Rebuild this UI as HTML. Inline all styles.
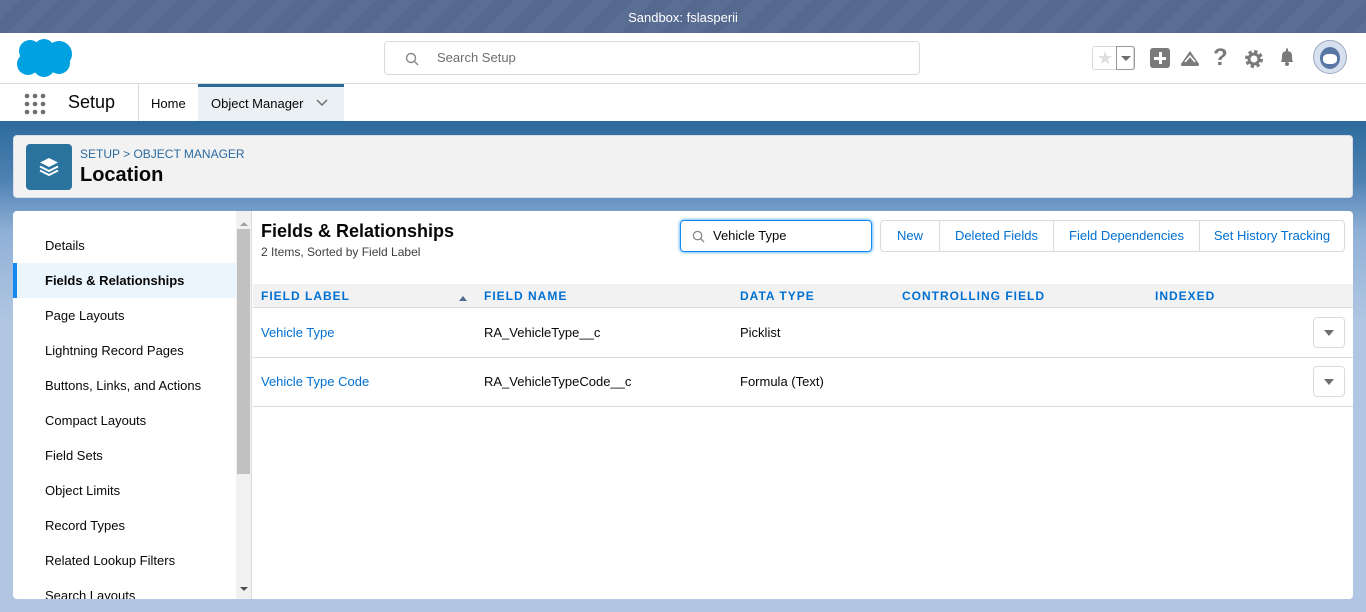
<!DOCTYPE html>
<html><head><meta charset="utf-8">
<style>
*{box-sizing:border-box;margin:0;padding:0}
body{width:1366px;height:612px;overflow:hidden;font-family:"Liberation Sans",sans-serif;font-size:13px;color:#080707;background:#fff;position:relative}
.abs{position:absolute}
#sb{left:0;top:0;width:1366px;height:33px;background:repeating-linear-gradient(135deg,#5a6e94 0 14px,#55698f 14px 28px);color:#fff;text-align:center;line-height:36px;font-size:13px}
#hdr{left:0;top:33px;width:1366px;height:51px;background:#fff;border-bottom:1px solid #dddbda}
#search{left:384px;top:8px;width:536px;height:34px;border:1px solid #dddbda;border-radius:4px;color:#706e6b;line-height:32px;padding-left:52px}
#nav{left:0;top:84px;width:1366px;height:37px;background:#fff}
#bg{left:0;top:121px;width:1366px;height:491px;background:linear-gradient(#2c6a9c 0,#4f82b3 60px,#8fb0d6 110px,#b0c6e2 200px,#b0c6e2 100%)}
#card{left:13px;top:135px;width:1340px;height:63px;background:#f3f2f2;border:1px solid #d8dde6;border-radius:4px}
#panel{left:13px;top:211px;width:1340px;height:388px;background:#fff;border-radius:4px;overflow:hidden}
.side a{display:block;height:35px;line-height:35px;padding-left:32px;color:#080707;text-decoration:none}
.btn{position:absolute;top:9px;height:32px;line-height:30px;border:1px solid #dddbda;color:#0070d2;text-align:center;background:#fff}
th{font-size:12px;font-weight:bold;letter-spacing:1px;color:#0070d2;text-align:left}
td{font-size:13px}
.ic{position:absolute;top:15px}
</style></head><body>
<div id="sb" class="abs">Sandbox: fslasperii</div>
<div id="hdr" class="abs">
<svg class="abs" style="left:15px;top:4px" width="60" height="42" viewBox="0 0 60 42"><g fill="#00a1e0"><circle cx="15" cy="14" r="11"/><circle cx="29" cy="12" r="10"/><circle cx="44" cy="17" r="13"/><circle cx="13" cy="27" r="11"/><circle cx="29" cy="29" r="11"/><circle cx="44" cy="26" r="11"/></g></svg>
<div id="search" class="abs">Search Setup
<svg class="abs" style="left:20px;top:10px" width="14" height="14" viewBox="0 0 14 14"><circle cx="6" cy="6" r="4.5" fill="none" stroke="#8a8886" stroke-width="1.4"/><line x1="9.3" y1="9.3" x2="13" y2="13" stroke="#8a8886" stroke-width="1.4"/></svg></div>
<div class="abs" style="left:1092px;top:13px;width:42px;height:24px;border:1px solid #d8d8d8;border-radius:3px"><span style="position:absolute;left:4px;top:1px;color:#ddd;font-size:18px">★</span><div style="position:absolute;left:23px;top:-1px;width:19px;height:24px;border:1px solid #999;border-radius:0 3px 3px 0"><div style="position:absolute;left:4px;top:9px;border:5px solid transparent;border-top:5px solid #706e6b"></div></div></div>
<div class="ic" style="left:1150px;width:20px;height:20px;background:#7a7a7a;border-radius:3px"><div style="position:absolute;left:9px;top:4px;width:3px;height:12px;background:#fff"></div><div style="position:absolute;left:4px;top:9px;width:12px;height:3px;background:#fff"></div></div>
<svg class="ic" style="left:1179px" width="22" height="20" viewBox="0 0 22 20"><path d="M2 16 L11 3 L20 16 Z" fill="#7a7a7a"/><path d="M6 14 L11 8 L16 14" fill="none" stroke="#fff" stroke-width="1.5"/><rect x="2" y="15" width="18" height="3" rx="1.5" fill="#7a7a7a"/></svg>
<div class="ic" style="left:1213px;top:11px;font-size:24px;color:#7a7a7a;font-weight:bold">?</div>
<svg class="ic" style="left:1244px;top:16px" width="20" height="20" viewBox="0 0 20 20"><circle cx="10" cy="10" r="7" fill="none" stroke="#7a7a7a" stroke-width="4" stroke-dasharray="3 2.5"/><circle cx="10" cy="10" r="5" fill="none" stroke="#7a7a7a" stroke-width="3"/></svg>
<svg class="ic" style="left:1277px;top:14px" width="20" height="20" viewBox="0 0 20 20"><path d="M4 15 Q5 13 5 9 Q5 4 10 4 Q15 4 15 9 Q15 13 16 15 Z" fill="#7a7a7a"/><circle cx="10" cy="17" r="2" fill="#7a7a7a"/><rect x="9" y="1.5" width="2" height="3" fill="#7a7a7a"/></svg>
<div class="abs" style="left:1313px;top:7px;width:34px;height:34px;border-radius:50%;background:#d6e0ef;border:1px solid #9aa9c2;overflow:hidden"><div style="position:absolute;left:6px;top:6px;width:20px;height:22px;background:#5876a3;border-radius:50%"></div><div style="position:absolute;left:9px;top:13px;width:14px;height:10px;background:#fff;border-radius:40%"></div></div>
</div>
<div id="nav" class="abs">
<svg class="abs" style="left:24px;top:9px" width="22" height="22" viewBox="0 0 22 22"><g fill="#706e6b"><circle cx="3" cy="3" r="2.3"/><circle cx="11" cy="3" r="2.3"/><circle cx="19" cy="3" r="2.3"/><circle cx="3" cy="11" r="2.3"/><circle cx="11" cy="11" r="2.3"/><circle cx="19" cy="11" r="2.3"/><circle cx="3" cy="19" r="2.3"/><circle cx="11" cy="19" r="2.3"/><circle cx="19" cy="19" r="2.3"/></g></svg>
<div class="abs" style="left:68px;top:8px;font-size:18px">Setup</div>
<div class="abs" style="left:138px;top:0;width:1px;height:37px;background:#dddbda"></div>
<div class="abs" style="left:151px;top:12px">Home</div>
<div class="abs" style="left:198px;top:0;width:146px;height:37px;background:#eaf0f4;border-top:3px solid #2b6a99"><span style="position:absolute;left:13px;top:9px">Object Manager</span><svg style="position:absolute;left:118px;top:12px" width="12" height="8" viewBox="0 0 12 8"><path d="M1 1 L6 6 L11 1" fill="none" stroke="#706e6b" stroke-width="1.5"/></svg></div>
</div>
<div id="bg" class="abs"></div>
<div id="card" class="abs">
<div class="abs" style="left:12px;top:8px;width:46px;height:46px;background:#2a739e;border-radius:4px"><svg style="position:absolute;left:12px;top:12px" width="22" height="22" viewBox="0 0 22 22"><path d="M11 2 L20 6.5 L11 11 L2 6.5 Z" fill="#fff"/><path d="M2 10.5 L11 15 L20 10.5" fill="none" stroke="#fff" stroke-width="2"/><path d="M2 14.5 L11 19 L20 14.5" fill="none" stroke="#fff" stroke-width="2"/></svg></div>
<div class="abs" style="left:66px;top:11px;font-size:12px;color:#2a6aa0">SETUP &gt; OBJECT MANAGER</div>
<div class="abs" style="left:66px;top:28px;font-size:20px;font-weight:bold">Location</div>
</div>
<div id="panel" class="abs">
<div class="side abs" style="left:0;top:17px;width:223px">
<a>Details</a><a style="background:#eaf5fe;font-weight:bold;border-left:4px solid #1589ee;padding-left:28px">Fields &amp; Relationships</a><a>Page Layouts</a><a>Lightning Record Pages</a><a>Buttons, Links, and Actions</a><a>Compact Layouts</a><a>Field Sets</a><a>Object Limits</a><a>Record Types</a><a>Related Lookup Filters</a><a>Search Layouts</a>
</div>
<div class="abs" style="left:223px;top:0;width:16px;height:388px;background:#f1f1f1;border-right:1px solid #dddbda">
<div style="position:absolute;left:1px;top:18px;width:13px;height:245px;background:#c1c1c1"></div>
<div style="position:absolute;left:4px;top:7px;border:4px solid transparent;border-bottom:4px solid #a3a3a3"></div>
<div style="position:absolute;left:4px;top:376px;border:4px solid transparent;border-top:4px solid #505050"></div>
</div>
<div class="abs" style="left:248px;top:10px;font-size:18px;font-weight:bold">Fields &amp; Relationships</div>
<div class="abs" style="left:248px;top:34px;font-size:12px;color:#3e3e3c">2 Items, Sorted by Field Label</div>
<div class="abs" style="left:667px;top:9px;width:192px;height:32px;border:1px solid #1589ee;border-radius:4px;box-shadow:0 0 3px #1589ee;line-height:30px;padding-left:32px">Vehicle Type
<svg style="position:absolute;left:11px;top:9px" width="13" height="13" viewBox="0 0 14 14"><circle cx="6" cy="6" r="4.5" fill="none" stroke="#8a8886" stroke-width="1.4"/><line x1="9.3" y1="9.3" x2="13" y2="13" stroke="#8a8886" stroke-width="1.4"/></svg></div>
<div class="btn" style="left:867px;width:60px;border-radius:4px 0 0 4px">New</div>
<div class="btn" style="left:926px;width:115px">Deleted Fields</div>
<div class="btn" style="left:1040px;width:147px">Field Dependencies</div>
<div class="btn" style="left:1186px;width:146px;border-radius:0 4px 4px 0">Set History Tracking</div>
<div class="abs" style="left:240px;top:73px;width:1100px;height:24px;background:#f3f2f2;border-bottom:1px solid #dddbda"></div>
<table class="abs" style="left:240px;top:73px;width:1100px;border-collapse:collapse;table-layout:fixed">
<tr style="height:24px"><th style="padding-left:8px;width:231px">FIELD LABEL</th><th style="width:256px">FIELD NAME</th><th style="width:162px">DATA TYPE</th><th style="width:253px">CONTROLLING FIELD</th><th>INDEXED</th></tr>
<tr style="height:49px;border-bottom:1px solid #dddbda"><td style="padding-left:8px;color:#0070d2">Vehicle Type</td><td>RA_VehicleType__c</td><td>Picklist</td><td></td><td></td></tr>
<tr style="height:49px;border-bottom:1px solid #dddbda"><td style="padding-left:8px;color:#0070d2">Vehicle Type Code</td><td>RA_VehicleTypeCode__c</td><td>Formula (Text)</td><td></td><td></td></tr>
</table>
<div class="abs" style="left:446px;top:81px;border:4px solid transparent;border-bottom:5px solid #54698d"></div>
<div class="abs" style="left:1300px;top:106px;width:32px;height:31px;border:1px solid #dddbda;border-radius:4px"><div style="position:absolute;left:10px;top:12px;border:5px solid transparent;border-top:6px solid #706e6b"></div></div>
<div class="abs" style="left:1300px;top:155px;width:32px;height:31px;border:1px solid #dddbda;border-radius:4px"><div style="position:absolute;left:10px;top:12px;border:5px solid transparent;border-top:6px solid #706e6b"></div></div>
</div>
</body></html>
